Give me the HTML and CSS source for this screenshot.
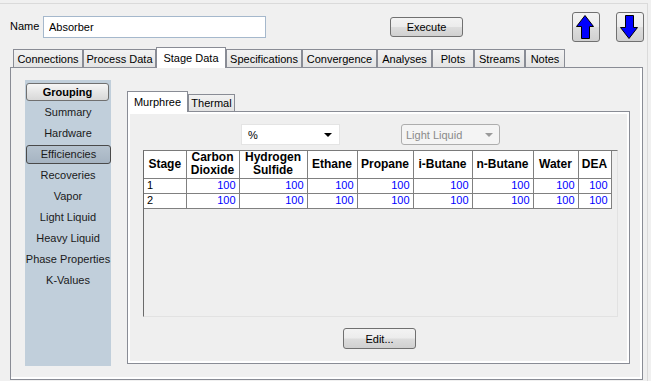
FILE: index.html
```html
<!DOCTYPE html>
<html lang="en">
<head>
    <meta charset="UTF-8">
    <title>Absorber</title>
    <link rel="stylesheet" href="styles.css">
</head>
<body>
<div class="window">
    <div class="head">
        <label class="name-label" for="name">Name</label>
        <input type="text" id="name" class="name-input" value="Absorber" />
        <button class="btn execute">Execute</button>
        <button class="btn arrow up">
            <svg width="20" height="26" viewBox="0 0 20 26"><path d="M10 1.5 L18.5 12.5 L14.5 12.5 L14.5 24.5 L6.5 24.5 L6.5 12.5 L1.5 12.5 Z" fill="#0000ff" stroke="#000" stroke-width="1"/></svg>
        </button>
        <button class="btn arrow down">
            <svg width="20" height="26" viewBox="0 0 20 26"><path d="M6.5 1.5 L14.5 1.5 L14.5 13.5 L18.5 13.5 L10 24.5 L1.5 13.5 L6.5 13.5 Z" fill="#0000ff" stroke="#000" stroke-width="1"/></svg>
        </button>
    </div>

    <div class="tabs">
        <button class="tab t-conn">Connections</button>
        <button class="tab t-proc">Process Data</button>
        <button class="tab t-stage active">Stage Data</button>
        <button class="tab t-spec">Specifications</button>
        <button class="tab t-conv">Convergence</button>
        <button class="tab t-anal">Analyses</button>
        <button class="tab t-plot">Plots</button>
        <button class="tab t-strm">Streams</button>
        <button class="tab t-note">Notes</button>
    </div>

    <div class="panel">
        <div class="sidebar">
            <button class="group-btn">Grouping</button>
            <ul class="groups">
                <li>Summary</li>
                <li>Hardware</li>
                <li class="selected">Efficiencies</li>
                <li>Recoveries</li>
                <li>Vapor</li>
                <li>Light Liquid</li>
                <li>Heavy Liquid</li>
                <li>Phase Properties</li>
                <li>K-Values</li>
            </ul>
        </div>

        <div class="stage">
            <div class="subtabs">
                <button class="subtab active">Murphree</button>
                <button class="subtab">Thermal</button>
            </div>
            <div class="subpanel">
                <div class="selects">
                    <div class="combo"><span>%</span><span class="caret"></span></div>
                    <div class="combo disabled"><span>Light Liquid</span><span class="caret"></span></div>
                </div>

                <div class="grid-area">
                    <table class="grid">
                        <colgroup>
                            <col class="c-stage"><col class="c-co2"><col class="c-h2s"><col class="c-eth">
                            <col class="c-pro"><col class="c-ibu"><col class="c-nbu"><col class="c-wat"><col class="c-dea">
                        </colgroup>
                        <tr>
                            <th>Stage</th>
                            <th>Carbon<br>Dioxide</th>
                            <th>Hydrogen<br>Sulfide</th>
                            <th>Ethane</th>
                            <th>Propane</th>
                            <th>i-Butane</th>
                            <th>n-Butane</th>
                            <th>Water</th>
                            <th>DEA</th>
                        </tr>
                        <tr>
                            <td class="stage-no">1</td>
                            <td>100</td><td>100</td><td>100</td><td>100</td>
                            <td>100</td><td>100</td><td>100</td><td>100</td>
                        </tr>
                        <tr>
                            <td class="stage-no">2</td>
                            <td>100</td><td>100</td><td>100</td><td>100</td>
                            <td>100</td><td>100</td><td>100</td><td>100</td>
                        </tr>
                    </table>
                </div>

                <div class="actions">
                    <button class="btn edit">Edit...</button>
                </div>
            </div>
        </div>
    </div>
</div>
</body>
</html>
```

FILE: styles.css
```css
* {
    box-sizing: border-box;
}
body {
    margin: 0;
    background-color: #f0f0f0;
    font-family: "Liberation Sans", Arial, sans-serif;
    font-size: 11px;
    color: #000;
}
.window {
    margin-top: 3px;
    width: 648px;
    height: 378px;
    border-top: 1px solid #dadada;
    border-right: 1px solid #dadada;
}

/* header row */
.head {
    display: flex;
    align-items: center;
    height: 30px;
    margin-top: 8px;
    padding-left: 10px;
}
.name-label {
    width: 33px;
    padding-bottom: 3px;
}
.name-input {
    width: 223px;
    height: 22px;
    border: 1px solid #a5b8cc;
    padding: 0 5px;
    font: inherit;
    background: #fff;
}
.btn {
    font: inherit;
    color: #000;
    padding: 0;
    border: 1px solid #707070;
    border-radius: 3px;
    background: linear-gradient(#f3f3f3 0%, #ececec 48%, #dddddd 52%, #d0d0d0 100%);
}
.execute {
    margin-left: 124px;
    width: 73px;
    height: 20px;
}
.arrow {
    width: 28px;
    height: 30px;
    display: flex;
    align-items: center;
    justify-content: center;
}
.arrow svg {
    display: block;
    margin-right: 3px;
}
.up {
    margin-left: 109px;
}
.down {
    margin-left: 16px;
}

/* main tabs */
.tabs {
    display: flex;
    align-items: flex-end;
    height: 20px;
    margin-top: 5px;
    padding-left: 13px;
    position: relative;
    z-index: 1;
}
.tab {
    height: 18px;
    padding: 0;
    font: inherit;
    color: #000;
    text-align: center;
    border: 1px solid #898c95;
    border-bottom: none;
    background: linear-gradient(#f2f2f2, #e4e4e4);
}
.tab.active {
    height: 21px;
    margin-bottom: -1px;
    background: #fff;
}
.t-conn { width: 70px; }
.t-proc { width: 73px; }
.t-stage { width: 70px; }
.t-spec { width: 76px; }
.t-conv { width: 75px; }
.t-anal { width: 55px; }
.t-plot { width: 42px; }
.t-strm { width: 51px; }
.t-note { width: 40px; }

.panel {
    margin-left: 10px;
    width: 633px;
    height: 313px;
    border: 1px solid #898c95;
    background-color: #f0f0f0;
    box-shadow: inset -2px -2px 0 #fff;
    display: flex;
    align-items: flex-start;
    padding: 12px 0 0 14px;
}

/* left grouping list */
.sidebar {
    width: 86px;
    height: 286px;
    background-color: #c1cfdb;
    padding-top: 3px;
}
.group-btn {
    display: block;
    margin-left: 1px;
    width: 83px;
    height: 18px;
    padding: 0;
    font: inherit;
    font-weight: bold;
    color: #000;
    border: 1px solid #707070;
    border-radius: 3px;
    background: linear-gradient(#f6f6f6, #e6e6e6 50%, #d8d8d8);
}
.groups {
    list-style: none;
    margin: 1px 0 0;
    padding: 0;
}
.groups li {
    height: 21px;
    line-height: 21px;
    text-align: center;
    color: #1a1a1a;
}
.groups li.selected {
    height: 19px;
    line-height: 17px;
    margin: 1px 0 1px 1px;
    border: 1px solid #4a4a4a;
    border-radius: 3px;
    background: linear-gradient(#b6c3cf, #a6b4c2);
}

/* stage data area */
.stage {
    margin-left: 16px;
    margin-top: 11px;
    width: 503px;
}
.subtabs {
    display: flex;
    align-items: flex-end;
    height: 20px;
    position: relative;
    z-index: 1;
}
.subtab {
    width: 47px;
    height: 17px;
    padding: 0;
    font: inherit;
    color: #000;
    border: 1px solid #898c95;
    border-bottom: none;
    background: linear-gradient(#f2f2f2, #e2e2e2);
}
.subtab.active {
    width: 61px;
    height: 21px;
    margin-bottom: -1px;
    background: #fff;
}
.subpanel {
    height: 253px;
    border: 1px solid #898c95;
    background-color: #efefef;
    box-shadow: inset 0 0 0 2px #fff;
    padding-top: 12px;
}
.selects {
    display: flex;
    gap: 61px;
    padding-left: 113px;
}
.combo {
    width: 99px;
    height: 21px;
    display: flex;
    align-items: center;
    justify-content: space-between;
    padding: 0 6px 0 6px;
    background: #fff;
    border: 1px solid #e4e4e4;
}
.caret {
    width: 0;
    height: 0;
    border-left: 4px solid transparent;
    border-right: 4px solid transparent;
    border-top: 4px solid #000;
    margin-right: 1px;
}
.combo.disabled {
    padding-left: 4px;
    background: #f4f4f4;
    border: 1px solid #adadad;
    border-radius: 3px;
    color: #8a8a8a;
}
.combo.disabled .caret {
    border-top-color: #9a9a9a;
    margin-right: 0;
}

.grid-area {
    margin: 5px 0 0 15px;
    width: 475px;
    height: 167px;
    border-top: 1px solid #7a7a7a;
    border-left: 1px solid #6a6a6a;
    border-right: 1px solid #e2e2e2;
    border-bottom: 1px solid #e2e2e2;
}
.grid {
    border-collapse: collapse;
    table-layout: fixed;
    width: 467px;
    background: #fff;
}
.c-stage { width: 42px; }
.c-co2 { width: 53px; }
.c-h2s { width: 68px; }
.c-eth { width: 50px; }
.c-pro { width: 56px; }
.c-ibu { width: 59px; }
.c-nbu { width: 61px; }
.c-wat { width: 45px; }
.c-dea { width: 33px; }
.grid th,
.grid td {
    border: 1px solid #808080;
    padding: 0 3px;
    white-space: nowrap;
    overflow: hidden;
}
.grid th {
    border-top: none;
    height: 27px;
    font-size: 12px;
    line-height: 13px;
    font-weight: bold;
    text-align: center;
    padding: 0 1px;
}
.grid th:first-child,
.grid td:first-child {
    border-left: none;
}
.grid td {
    height: 15px;
    line-height: 13px;
    text-align: right;
    color: #0000ff;
}
.grid td.stage-no {
    text-align: left;
    color: #000;
}

.actions {
    display: flex;
    justify-content: center;
    margin-top: 11px;
}
.edit {
    width: 73px;
    height: 21px;
    margin-left: 2px;
}
```
